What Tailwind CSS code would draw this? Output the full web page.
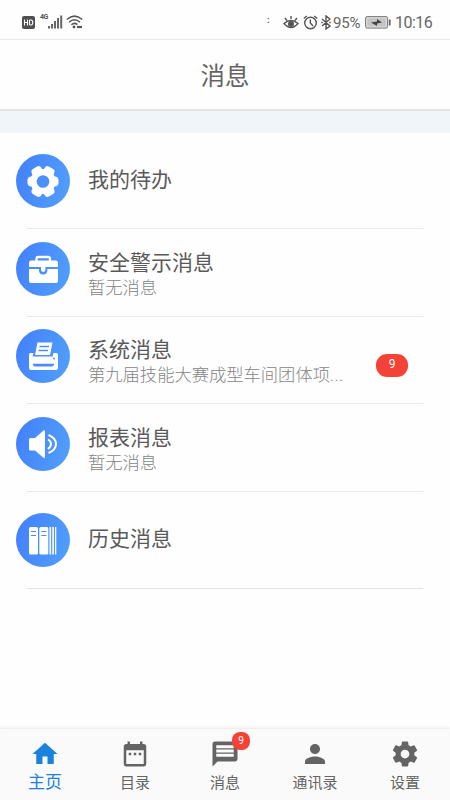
<!DOCTYPE html>
<html lang="zh-CN">
<head>
<meta charset="utf-8">
<meta name="viewport" content="width=device-width, initial-scale=1">
<title>消息</title>
<script src="https://cdn.jsdelivr.net/npm/@tailwindcss/browser@4"></script>
</head>
<body class="bg-white">
<div class="flex h-[800px] w-[450px] flex-col overflow-hidden bg-[#fefefe] font-['Roboto','Noto_Sans_CJK_SC',sans-serif] text-[#5a5a5a]">
  <!-- Status bar -->
  <div class="flex h-10 shrink-0 items-center border-b border-[#e9e9e9] pt-[5px] pl-[22px] text-[#555]">
    <svg class="h-[13px] w-[13px]" viewBox="0 0 13 13"><rect width="13" height="13" rx="2" fill="#505050"/><path d="M2.500 3.500v6M5.500 3.500v6M2.500 6.500h3M7.500 4v5M7.500 4h1.300q2 0 2 2.500t-2 2.500H7.500" fill="none" stroke="#fff" stroke-width="1.100"/></svg>
    <span class="ml-[5px] mb-[9px] w-[8px] text-[7px] leading-[7px] font-bold tracking-[-0.5px]">4G</span>
    <svg class="h-[14px] w-[15px]" viewBox="0 0 15 14" fill="#666"><rect x="0" y="11" width="2" height="2.500"/><rect x="3" y="9" width="2" height="4.500"/><rect x="6" y="6" width="2" height="7.500"/><rect x="9" y="3" width="2" height="10.500"/><rect x="12.200" y="0.500" width="2" height="13"/></svg>
    <svg class="ml-[3px] h-[14px] w-[17px]" viewBox="0 0 17 14" fill="none" stroke="#555" stroke-width="1.500"><path d="M.8 4.500Q8.500-2.300 16.200 4.500M3 7.200Q8.500 2.200 14 7.200M5.400 9.800Q8.500 7 11.400 9.600"/><circle cx="8" cy="12" r="1.400" fill="#555" stroke="none"/><path d="M11 12h5" stroke-width="2.200"/></svg>
    <span class="ml-[184px] w-[3px] pb-1 text-[9px] leading-[9px] font-bold">:</span>
    <svg class="ml-[13px] h-[15px] w-[16px]" viewBox="0 0 16 15" fill="none" stroke="#555" stroke-width="1.400"><path d="M1 8.500q7-6 14 0q-7 8-14 0zM2 3l2 2.500M8 1v3M14 3l-2 2.500"/><circle cx="8" cy="9" r="2.300" fill="#555"/></svg>
    <svg class="ml-[4px] h-[15px] w-[15px]" viewBox="0 0 15 15" fill="none" stroke="#555" stroke-width="1.400"><circle cx="7.500" cy="8" r="5.800"/><path d="M7.300 4.500V8l2.800 3M.8 3.500L3.800 1M14.200 3.500L11.200 1"/></svg>
    <svg class="ml-[3px] h-[15px] w-[10px]" viewBox="0 0 10 15" fill="none" stroke="#555" stroke-width="1.400"><path d="M1 4l8 7-4 3V1l4 3-8 7M.3 7.500h1.500M8.200 7.500h1.500"/></svg>
    <span class="ml-[2px] mt-[2px] w-[29px] text-[15px] leading-4 tracking-[-0.2px] text-[#666]">95%</span>
    <svg class="ml-[3px] h-[13px] w-[26px]" viewBox="0 0 26 13"><rect x=".6" y=".6" width="22" height="11.500" rx="1.500" fill="#ddd" stroke="#777" stroke-width="1"/><rect x="2.300" y="2.300" width="18.500" height="8" fill="#c4c4c4"/><path d="M6 6.500l6-1V3l5 3.500-5 1V10z" fill="#444"/><path d="M24.700 3.500v6" stroke="#666" stroke-width="1.800"/></svg>
    <span class="ml-[4px] mt-[2px] text-[16px] leading-4 tracking-[-0.5px] text-[#666]">10:16</span>
  </div>
  <!-- Title -->
  <header class="flex h-[71px] shrink-0 items-center justify-center border-b-2 border-[#e3e3e3] pt-[5px] text-[24.500px] text-[#646464]">消息</header>
  <div class="h-[22px] shrink-0 bg-[#f0f5fa]"></div>
  <!-- Message list -->
  <main class="flex flex-1 flex-col">
    <section class="flex h-[96px] shrink-0 flex-col pl-4">
      <div class="flex flex-1 items-center">
        <div class="h-[54px] w-[54px] rounded-full bg-linear-105 from-[#437ffc] to-[#52a0fa]">
          <svg viewBox="0 0 54 54"><g fill="#fff"><circle cx="27" cy="27.500" r="12.600"/><rect x="11.500" y="22.500" width="31" height="10" rx="4"/><rect x="11" y="22" width="32" height="11" rx="3.500" transform="rotate(60 27 27.500)"/><rect x="11" y="22" width="32" height="11" rx="3.500" transform="rotate(120 27 27.500)"/></g><circle cx="27" cy="27.500" r="6.300" fill="#4b8ffb"/></svg>
        </div>
        <div class="ml-[18px] pb-[2px] text-[21px] leading-6">我的待办</div>
      </div>
      <div class="ml-[11px] mr-[27px] h-px bg-[#e8e8e8]"></div>
    </section>

    <section class="flex h-[88px] shrink-0 flex-col pl-4">
      <div class="flex flex-1 items-center pb-[8px]">
        <div class="h-[54px] w-[54px] rounded-full bg-linear-105 from-[#437ffc] to-[#52a0fa]">
          <svg viewBox="0 0 54 54"><path d="M20.500 20v-3q0-2 2-2h9.500q2 0 2 2v3" fill="none" stroke="#fff" stroke-width="2.300"/><path d="M15 18.500h24.500q2.500 0 2.500 2.500v4h-29v-4q0-2.500 2-2.500z" fill="#fff"/><path d="M13 27h10v1q0 4.500 4.200 4.500t4.200-4.500v-1H42v12q0 2-2 2H15q-2 0-2-2z" fill="#fff"/><path d="M25 25h4.400v3q-.5 2-2.200 2t-2.200-2z" fill="#fff"/></svg>
        </div>
        <div class="ml-[18px] pt-[13px]">
          <div class="text-[21px] leading-[25px]">安全警示消息</div>
          <div class="text-[17.300px] leading-[24px] text-[#858585] font-light">暂无消息</div>
        </div>
      </div>
      <div class="ml-[11px] mr-[27px] h-px bg-[#e8e8e8]"></div>
    </section>

    <section class="flex h-[87px] shrink-0 flex-col pl-4">
      <div class="flex flex-1 items-center pb-[8px]">
        <div class="h-[54px] w-[54px] shrink-0 rounded-full bg-linear-105 from-[#437ffc] to-[#52a0fa]">
          <svg viewBox="0 0 54 54"><path d="M21.500 13.500h15l-2.500 12.500h-15z" fill="#fff"/><path d="M23.500 17.500h9.500M22.500 21.500h9.500" stroke="#4b8efb" stroke-width="1.300"/><path d="M14.500 24h3l-.8 3.500h20l.8-3.500h3q1.500 0 1.500 1.500v13.500q0 2-2 2H15q-2 0-2-2V25.500q0-1.500 1.500-1.500z" fill="#fff"/><path d="M17 34.800h21v.7q0 2-2 2H19q-2 0-2-2z" fill="#4b8efb"/><circle cx="38" cy="29.500" r="1" fill="#4b8efb"/></svg>
        </div>
        <div class="ml-[18px] w-[260px] pt-[13px]">
          <div class="text-[21px] leading-[25px]">系统消息</div>
          <div class="whitespace-nowrap text-[17.300px] leading-[24px] text-[#858585] font-light">第九届技能大赛成型车间团体项<span class="tracking-[0.4px]">...</span></div>
        </div>
        <div class="ml-[28px] mt-[19px] flex h-[23px] w-[32px] items-center justify-center rounded-[11px] bg-[#f44336] pb-[3px] text-[12px] leading-none text-white">9</div>
      </div>
      <div class="ml-[11px] mr-[27px] h-px bg-[#e8e8e8]"></div>
    </section>

    <section class="flex h-[88px] shrink-0 flex-col pl-4">
      <div class="flex flex-1 items-center pb-[8px]">
        <div class="h-[54px] w-[54px] rounded-full bg-linear-105 from-[#437ffc] to-[#52a0fa]">
          <svg viewBox="0 0 54 54"><path d="M13 22.500q0-1.500 1.500-1.500H19l8.500-7.500q1.500-.8 1.500 1v25.500q0 1.500-1.500.7L19 33.500h-4.500q-1.500 0-1.500-1.500z" fill="#fff"/><path d="M32 22.500q3 1.700 3 4.500t-3 5M32.500 18q7.500 3.200 7.500 9t-7.500 9" fill="none" stroke="#fff" stroke-width="2"/></svg>
        </div>
        <div class="ml-[18px] pt-[13px]">
          <div class="text-[21px] leading-[25px]">报表消息</div>
          <div class="text-[17.300px] leading-[24px] text-[#858585] font-light">暂无消息</div>
        </div>
      </div>
      <div class="ml-[11px] mr-[27px] h-px bg-[#e8e8e8]"></div>
    </section>

    <section class="flex h-[97px] shrink-0 flex-col pl-4">
      <div class="flex flex-1 items-center">
        <div class="h-[54px] w-[54px] rounded-full bg-linear-105 from-[#437ffc] to-[#52a0fa]">
          <svg viewBox="0 0 54 54"><g fill="#fff"><rect x="13" y="14" width="9" height="27.500" rx="1.500"/><rect x="23.300" y="14" width="9" height="27.500" rx="1.500"/><rect x="33.500" y="14" width="1.600" height="27.500"/><rect x="36.300" y="14" width="1.600" height="27.500"/><rect x="39" y="14" width="1.300" height="27.500"/></g><path d="M15 18.500h5M15 22.500h5M25.300 18.500h5M25.300 22.500h5" stroke="#4b8efb" stroke-width="1.200"/></svg>
        </div>
        <div class="ml-[18px] pb-[3px] text-[21px] leading-6">历史消息</div>
      </div>
      <div class="ml-[11px] mr-[27px] h-px bg-[#e4e4e4]"></div>
    </section>
  </main>
  <!-- Tab bar -->
  <nav class="grid h-[71px] shrink-0 grid-cols-5 bg-[#fafafa] pt-[10px] text-[15px] text-[#646464] shadow-[0_-1px_3px_rgba(0,0,0,0.10)]">
    <div class="flex flex-col items-center text-[#1b82dc]">
      <svg class="h-[30px] w-[30px]" viewBox="0 0 24 24" fill="currentColor"><path d="M10 20v-6h4v6h5v-8h3L12 3 2 12h3v8z"/></svg>
      <span class="text-[17px] leading-[26px]">主页</span>
    </div>
    <div class="flex flex-col items-center">
      <svg class="h-[30px] w-[30px]" viewBox="0 0 24 24" fill="currentColor"><path d="M9 11H7v2h2v-2zm4 0h-2v2h2v-2zm4 0h-2v2h2v-2zm2-7h-1V2h-2v2H8V2H6v2H5c-1.110 0-2 .9-2 2v14c0 1.100.89 2 2 2h14c1.100 0 2-.9 2-2V6c0-1.100-.9-2-2-2zm0 16H5V9h14v11z"/></svg>
      <span class="leading-[29px]">目录</span>
    </div>
    <div class="flex flex-col items-center">
      <div class="relative">
        <svg class="h-[30px] w-[30px]" viewBox="0 0 24 24" fill="currentColor"><path fill-rule="evenodd" d="M20 2H4c-1.100 0-2 .9-2 2v18l4-4h14c1.100 0 2-.9 2-2V4c0-1.100-.9-2-2-2zM5 5h14v2.300H5zm0 3.400h14v2.300H5zm0 3.400h14v2.300H5z"/></svg>
        <span class="absolute -top-[7px] left-[22px] flex h-[18px] w-[18px] items-center justify-center rounded-[8px] bg-[#f44336] pb-px text-[10px] leading-none text-white">9</span>
      </div>
      <span class="leading-[29px]">消息</span>
    </div>
    <div class="flex flex-col items-center">
      <svg class="h-[30px] w-[30px]" viewBox="0 0 24 24" fill="currentColor"><path d="M12 12c2.210 0 4-1.790 4-4s-1.790-4-4-4-4 1.790-4 4 1.790 4 4 4zm0 2c-2.670 0-8 1.340-8 4v2h16v-2c0-2.660-5.330-4-8-4z"/></svg>
      <span class="leading-[29px]">通讯录</span>
    </div>
    <div class="flex flex-col items-center">
      <svg class="h-[30px] w-[30px]" viewBox="0 0 24 24" fill="currentColor"><path d="M19.430 12.980c.04-.32.07-.64.07-.98s-.03-.66-.07-.98l2.110-1.650c.19-.15.24-.42.12-.64l-2-3.460c-.12-.22-.39-.3-.61-.22l-2.490 1c-.52-.4-1.080-.73-1.690-.98l-.38-2.650C14.460 2.180 14.250 2 14 2h-4c-.25 0-.46.18-.49.42l-.38 2.650c-.61.25-1.170.59-1.690.98l-2.490-1c-.23-.09-.49 0-.61.22l-2 3.460c-.13.22-.07.49.12.64l2.110 1.650c-.04.32-.07.65-.07.98s.03.66.07.98l-2.110 1.650c-.19.15-.24.42-.12.64l2 3.460c.12.22.39.3.61.22l2.490-1c.52.4 1.080.73 1.690.98l.38 2.650c.03.24.24.42.49.42h4c.25 0 .46-.18.49-.42l.38-2.650c.61-.25 1.170-.59 1.690-.98l2.490 1c.23.09.49 0 .61-.22l2-3.460c.12-.22.07-.49-.12-.64l-2.110-1.650zM12 15.500c-1.930 0-3.500-1.570-3.500-3.500s1.570-3.500 3.500-3.500 3.500 1.570 3.500 3.500-1.570 3.500-3.500 3.500z"/></svg>
      <span class="leading-[29px]">设置</span>
    </div>
  </nav>
</div>
</body>
</html>
